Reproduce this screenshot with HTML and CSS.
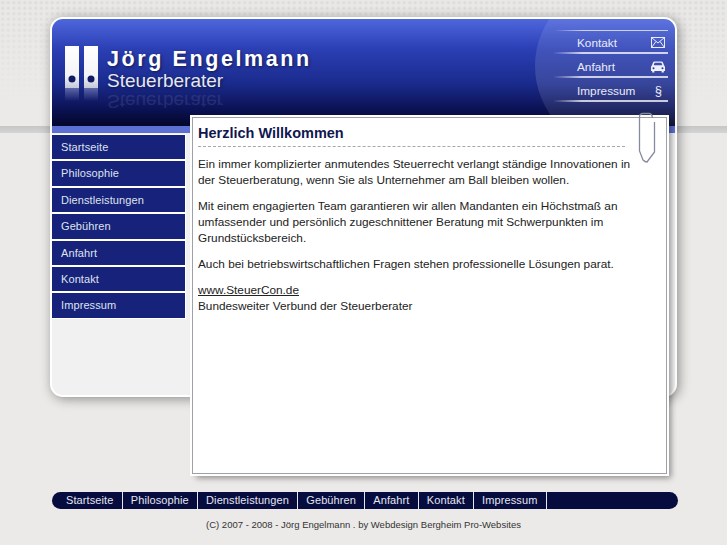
FILE: index.html
```html
<!DOCTYPE html>
<html lang="de">
<head>
    <meta charset="UTF-8">
    <meta name="viewport" content="width=device-width, initial-scale=1.0">
    <title>Jörg Engelmann Steuerberater</title>
    <link rel="stylesheet" href="styles.css">
</head>
<body>

<div class="frame">
    <div class="header">
        <div class="circle"></div>
        <div class="logo">
            <svg class="binders" width="34" height="56" viewBox="0 0 34 56">
                <defs>
                    <linearGradient id="binderFill" x1="0" y1="0" x2="0" y2="1">
                        <stop offset="0" stop-color="#ffffff"/>
                        <stop offset="0.7" stop-color="#f4f4f8"/>
                        <stop offset="1" stop-color="#c4c8d8"/>
                    </linearGradient>
                    <linearGradient id="binderShine" x1="0" y1="0" x2="0" y2="1">
                        <stop offset="0" stop-color="#ffffff" stop-opacity="0.3"/>
                        <stop offset="1" stop-color="#ffffff" stop-opacity="0"/>
                    </linearGradient>
                </defs>
                <rect x="0" y="0" width="14" height="42" fill="url(#binderFill)"/>
                <rect x="19" y="0" width="14" height="42" fill="url(#binderFill)"/>
                <circle cx="7" cy="33" r="3.5" fill="#111b63"/>
                <circle cx="26" cy="33" r="3.5" fill="#111b63"/>
                <rect x="0" y="42" width="14" height="13" fill="url(#binderShine)"/>
                <rect x="19" y="42" width="14" height="13" fill="url(#binderShine)"/>
            </svg>
            <div class="logo-text">
                <div class="logo-name">Jörg Engelmann</div>
                <div class="logo-job">Steuerberater</div>
                <div class="logo-job logo-mirror" aria-hidden="true">Steuerberater</div>
            </div>
        </div>
        <ul class="quick">
            <li><a href="#">Kontakt</a>
                <svg width="14" height="11" viewBox="0 0 14 11" fill="none" stroke="#e8ebf8" stroke-width="1">
                    <rect x="0.5" y="0.5" width="13" height="10"/>
                    <path d="M0.5 0.5 L7 6 L13.5 0.5 M0.5 10.5 L5 4.5 M13.5 10.5 L9 4.5"/>
                </svg>
            </li>
            <li><a href="#">Anfahrt</a>
                <svg width="14" height="12" viewBox="0 0 14 12" fill="#eef0fa">
                    <path d="M3.5 0.5 H10.5 Q11.5 0.5 12 1.5 L13 4.3 Q14 5 14 6.5 V10 H12.8 V11.5 H10.6 V10 H3.4 V11.5 H1.2 V10 H0 V6.5 Q0 5 1 4.3 L2 1.5 Q2.5 0.5 3.5 0.5 Z M3.6 1.8 L2.7 4.3 H11.3 L10.4 1.8 Z"/>
                    <circle cx="2.5" cy="7.2" r="1" fill="#2d3a8c"/>
                    <circle cx="11.5" cy="7.2" r="1" fill="#2d3a8c"/>
                </svg>
            </li>
            <li><a href="#">Impressum</a><span class="para">§</span></li>
        </ul>
    </div>
    <div class="strip"></div>
    <div class="main">
        <ul class="sidenav">
            <li><a href="#">Startseite</a></li>
            <li><a href="#">Philosophie</a></li>
            <li><a href="#">Dienstleistungen</a></li>
            <li><a href="#">Gebühren</a></li>
            <li><a href="#">Anfahrt</a></li>
            <li><a href="#">Kontakt</a></li>
            <li><a href="#">Impressum</a></li>
        </ul>
        <div class="content">
            <svg class="clip" width="18" height="52" viewBox="0 0 18 52" fill="none">
                <path d="M16.5 10 V40 L9 50 Q7 50 5 48 L1.5 39 V5 Q1.5 1.5 5 1.5 H11 Q14 1.5 14.5 6" stroke="#858a9c" stroke-width="1.3"/>
            </svg>
            <h1>Herzlich Willkommen</h1>
            <p>Ein immer komplizierter anmutendes Steuerrecht verlangt ständige Innovationen in der Steuerberatung, wenn Sie als Unternehmer am Ball bleiben wollen.</p>
            <p>Mit einem engagierten Team garantieren wir allen Mandanten ein Höchstmaß an umfassender und persönlich zugeschnittener Beratung mit Schwerpunkten im Grundstücksbereich.</p>
            <p>Auch bei betriebswirtschaftlichen Fragen stehen professionelle Lösungen parat.</p>
            <p><a href="#">www.SteuerCon.de</a><br>Bundesweiter Verbund der Steuerberater</p>
        </div>
    </div>
</div>

<ul class="footnav">
    <li><a href="#">Startseite</a></li>
    <li><a href="#">Philosophie</a></li>
    <li><a href="#">Dienstleistungen</a></li>
    <li><a href="#">Gebühren</a></li>
    <li><a href="#">Anfahrt</a></li>
    <li><a href="#">Kontakt</a></li>
    <li><a href="#">Impressum</a></li>
</ul>
<div class="copy">(C) 2007 - 2008 - Jörg Engelmann . by Webdesign Bergheim Pro-Websites</div>

</body>
</html>
```
FILE: styles.css
```css
html, body {
    height: 100%;
}

body {
    margin: 0;
    overflow: hidden;
    font-family: "Liberation Sans", Arial, sans-serif;
    font-size: 11.8px;
    color: #222;
    background-color: #e6e6e5;
    background-image:
        linear-gradient(to bottom, transparent 126px, #c6c6c6 126px, #d4d4d4 133px, transparent 133px),
        linear-gradient(to bottom, rgba(235, 234, 232, 0.45), #ebeae8 105px),
        radial-gradient(circle, #cfcfcf 1.2px, transparent 1.8px);
    background-size: auto, auto, 5.5px 5.5px;
    padding-top: 17px;
    box-sizing: border-box;
}

ul {
    list-style: none;
    margin: 0;
    padding: 0;
}

a {
    color: inherit;
    text-decoration: none;
}

/* outer white frame */
.frame {
    width: 623px;
    height: 376px;
    margin-left: 50px;
    border: 2px solid #fff;
    border-radius: 13px;
    background: #f1f1f1;
    box-shadow: 2px 2px 12px rgba(0, 0, 0, 0.4);
}

.header {
    position: relative;
    height: 107px;
    display: flex;
    justify-content: space-between;
    overflow: hidden;
    border-radius: 11px 11px 0 0;
    background: linear-gradient(to bottom, #4e66dc 0, #2b3fb4 30px, #1a2a8c 65px, #0b1254 90px, #03052a 107px);
}

.circle {
    position: absolute;
    left: 483px;
    top: -38px;
    width: 170px;
    height: 170px;
    border-radius: 50%;
    background: linear-gradient(to bottom, rgba(255, 255, 255, 0.06), rgba(255, 255, 255, 0.13) 60%, rgba(255, 255, 255, 0.04));
}

.logo {
    position: relative;
    display: flex;
    gap: 8px;
    padding: 27px 0 0 13px;
}

.binders {
    display: block;
}

.logo-text {
    color: #fff;
    text-shadow: 1px 1px 3px rgba(0, 0, 0, 0.5);
}

.logo-name {
    font-size: 21.5px;
    line-height: 24px;
    font-weight: bold;
    letter-spacing: 2.6px;
    margin-top: 1px;
}

.logo-job {
    font-size: 19px;
    line-height: 20px;
    color: #e4e7f2;
}

.logo-mirror {
    transform: scaleY(-1);
    opacity: 0.1;
    text-shadow: none;
}

.quick {
    position: relative;
    width: 114px;
    margin: 11px 7px 0 0;
    color: #e8ebf8;
    background: linear-gradient(to right, transparent, rgba(255, 255, 255, 0.7) 25%) top / 100% 1px no-repeat;
}

.quick li {
    height: 19px;
    padding: 3px 3px 0 23px;
    display: flex;
    align-items: center;
    justify-content: space-between;
    border-bottom: 2px solid transparent;
    border-image: linear-gradient(to right, transparent, rgba(255, 255, 255, 0.75) 25%) 1;
}

.para {
    font-size: 13px;
    margin-right: 3px;
}

.strip {
    height: 7px;
    background: #5b70d2;
}

.main {
    display: flex;
    gap: 7px;
}

.sidenav {
    width: 133px;
    padding-top: 2px;
}

.sidenav li {
    height: 24.4px;
    line-height: 25px;
    margin-bottom: 2px;
    padding-left: 9px;
    background: #17237a;
    box-shadow: 0 0 0 1px #fff;
    color: #dfe2ee;
    font-size: 11px;
    letter-spacing: 0.1px;
}

.content {
    position: relative;
    box-sizing: border-box;
    width: 475px;
    height: 357px;
    margin-top: -16px;
    padding: 6px 25px 0 5px;
    background: #fff;
    border: 1px solid #a0a0a8;
    outline: 2px solid #fff;
    box-shadow: 4px 4px 6px rgba(0, 0, 0, 0.4);
    line-height: 16px;
}

.clip {
    position: absolute;
    right: 10px;
    top: -6px;
}

.content h1 {
    margin: 0 0 9px;
    padding-bottom: 4px;
    font-size: 14.5px;
    line-height: 18px;
    color: #10174f;
    width: 427px;
    border-bottom: 1px dashed #a8a8a8;
}

.content p {
    margin: 0 0 10px;
}

.content p a {
    text-decoration: underline;
}

.footnav {
    display: flex;
    box-sizing: border-box;
    width: 626px;
    height: 17px;
    margin: 95px 0 0 52px;
    padding-left: 6px;
    border-radius: 9px;
    background: #060c3e;
    color: #e4e6f0;
    font-size: 11px;
    line-height: 17px;
    letter-spacing: 0.1px;
}

.footnav li {
    padding: 0 8.3px 0 8px;
    border-right: 1px solid #e4e6f0;
}

.copy {
    margin-top: 10px;
    text-align: center;
    font-size: 9.5px;
    color: #333;
}
```
